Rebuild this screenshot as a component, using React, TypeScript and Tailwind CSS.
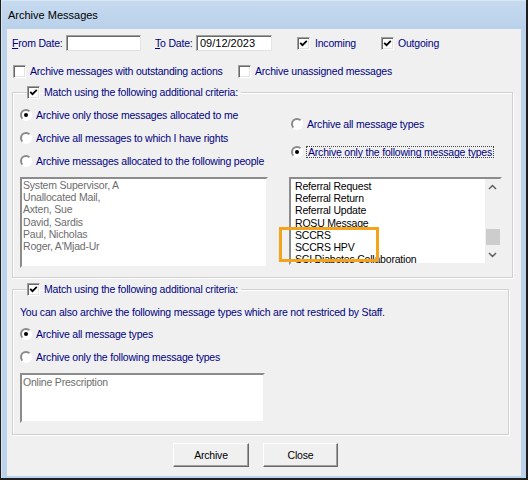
import React from "react";

const Check = ({ checked }: { checked?: boolean }) => (
  <span className="w-[13px] h-[13px] shrink-0 bg-white border border-t-[#a0a0a0] border-l-[#a0a0a0] border-b-white border-r-white shadow-[inset_1px_1px_0_#696969,inset_-1px_-1px_0_#e3e3e3] flex items-center justify-center">
    {checked && (
      <svg width="9" height="9" viewBox="0 0 9 9">
        <path d="M1.2 3.8 L3.5 6.2 L7.8 1.8" stroke="#000" strokeWidth="1.8" fill="none" />
      </svg>
    )}
  </span>
);

const Radio = ({ on }: { on?: boolean }) => (
  <span className="w-[12px] h-[12px] shrink-0 rounded-full bg-white border-2 border-t-[#8a8a8a] border-l-[#8a8a8a] border-r-[#ffffff] border-b-[#ffffff] flex items-center justify-center">
    {on && <span className="w-[4px] h-[4px] rounded-full bg-black" />}
  </span>
);

const Chevron = ({ up }: { up?: boolean }) => (
  <svg width="9" height="6" viewBox="0 0 9 6">
    <path d={up ? "M1 5 L4.5 1.5 L8 5" : "M1 1 L4.5 4.5 L8 1"} stroke="#606060" strokeWidth="1.5" fill="none" />
  </svg>
);

const label = "text-[#000080]";

export default function App() {
  const people = [
    "System Supervisor, A",
    "Unallocated Mail,",
    "Axten, Sue",
    "David, Sardis",
    "Paul, Nicholas",
    "Roger, A'Mjad-Ur",
  ];
  const types = [
    "Referral Request",
    "Referral Return",
    "Referral Update",
    "ROSU Message",
    "SCCRS",
    "SCCRS HPV",
    "SCI Diabetes Collaboration",
  ];
  return (
    <div className="w-[528px] h-[480px] bg-[#1e1e1e] pl-[1px] pr-[2px] pb-[2px] font-['Liberation_Sans',Arial,sans-serif] text-[10.5px] tracking-[-0.2px] leading-[14px]">
      <div className="h-full flex flex-col bg-[#bcd3eb] border-t border-l border-[#d8e6f4]">
        <div className="h-[28px] shrink-0 flex items-center pl-[6px] text-[11px] tracking-normal text-black bg-[linear-gradient(#c6daef,#b9d1ea)]">
          Archive Messages
        </div>
        <div className="flex-1 ml-[5px] mr-[5px] mb-[2px] bg-[#f0f0f0] pl-[5px] flex flex-col">
          {/* Row 1 */}
          <div className="mt-[6px] h-[16px] flex items-center">
            <span className={`${label} w-[54px]`}>
              <span className="underline">F</span>rom Date:
            </span>
            <span className="w-[75px] h-[16px] bg-white border border-t-[#a0a0a0] border-l-[#a0a0a0] border-b-[#e3e3e3] border-r-[#e3e3e3] shadow-[inset_1px_1px_0_#696969]" />
            <span className={`${label} ml-[14px] w-[41px]`}>
              <span className="underline">T</span>o Date:
            </span>
            <span className="w-[76px] h-[16px] bg-white border border-t-[#a0a0a0] border-l-[#a0a0a0] border-b-[#e3e3e3] border-r-[#e3e3e3] shadow-[inset_1px_1px_0_#696969] pl-[3px] text-black flex items-center text-[11px] tracking-normal">
              09/12/2023
            </span>
            <span className="ml-[25px] w-[84px] flex items-center gap-[5px]">
              <Check checked />
              <span className={label}>Incoming</span>
            </span>
            <span className="flex items-center gap-[4px]">
              <Check checked />
              <span className={label}>Outgoing</span>
            </span>
          </div>
          {/* Row 2 */}
          <div className="mt-[13px] h-[14px] flex items-center">
            <span className="ml-[1px] w-[225px] flex items-center gap-[4px]">
              <Check />
              <span className={label}>Archive messages with outstanding actions</span>
            </span>
            <span className="flex items-center gap-[4px]">
              <Check />
              <span className={label}>Archive unassigned messages</span>
            </span>
          </div>

          {/* Group 1 */}
          <fieldset className="relative mt-[7px] w-[501px] border border-[#d0d0d0] shadow-[inset_1px_1px_0_#fff,1px_1px_0_#fff] pl-[7px] pr-[10px] pb-[9px]">
            <legend className="ml-[7px] pr-[3px] h-[14px] flex items-center gap-[4px]">
              <Check checked />
              <span className={label}>Match using the following additional criteria:</span>
            </legend>
            <div className="flex">
              <div className="w-[248px] flex flex-col">
                <div className="mt-[9px] h-[14px] flex items-center gap-[4px]">
                  <Radio on />
                  <span className={label}>Archive only those messages allocated to me</span>
                </div>
                <div className="mt-[9px] h-[14px] flex items-center gap-[4px]">
                  <Radio />
                  <span className={label}>Archive all messages to which I have rights</span>
                </div>
                <div className="mt-[9px] h-[14px] flex items-center gap-[4px]">
                  <Radio />
                  <span className={label}>Archive messages allocated to the following people</span>
                </div>
                <div className="mt-[9px] h-[91px] bg-white border-2 border-t-[#8c8c8c] border-l-[#8c8c8c] border-b-[#f0f0f0] border-r-[#f0f0f0] pt-[0px] pl-[1px] text-[#6d6d6d] leading-[12.2px]">
                  {people.map((p) => (
                    <div key={p}>{p}</div>
                  ))}
                </div>
              </div>
              <div className="ml-[21px] w-[213px] flex flex-col">
                <div className="mt-[18px] ml-[2px] h-[14px] flex items-center gap-[4px]">
                  <Radio />
                  <span className={label}>Archive all message types</span>
                </div>
                <div className="mt-[14px] ml-[2px] h-[14px] flex items-center gap-[3px]">
                  <Radio on />
                  <span className={`${label} border border-dotted border-[#444] leading-[10px] px-[1px]`}>
                    Archive only the following message types
                  </span>
                </div>
                <div className="mt-[18px] h-[88px] bg-white border-2 border-t-[#8c8c8c] border-l-[#8c8c8c] border-b-[#f0f0f0] border-r-[#f0f0f0] flex overflow-hidden">
                  <div className="flex-1 pt-[1px] pl-[4px] text-black leading-[12.2px] overflow-hidden">
                    {types.map((t) => (
                      <div key={t} className="whitespace-nowrap">{t}</div>
                    ))}
                  </div>
                  <div className="w-[15px] bg-[#f0f0f0] flex flex-col items-center">
                    <div className="h-[16px] flex items-center justify-center">
                      <Chevron up />
                    </div>
                    <div className="flex-1 flex flex-col justify-end">
                      <div className="w-[14px] h-[16px] bg-[#cdcdcd] mb-[2px]" />
                    </div>
                    <div className="h-[16px] flex items-center justify-center">
                      <Chevron />
                    </div>
                  </div>
                </div>
              </div>
            </div>
            <div className="absolute left-[266px] top-[128px] w-[100px] h-[35px] border-[3px] border-[#f5a31a]" />
          </fieldset>

          {/* Group 2 */}
          <fieldset className="mt-[4px] w-[497px] border border-[#d0d0d0] shadow-[inset_1px_1px_0_#fff,1px_1px_0_#fff] pl-[7px] pb-[11px]">
            <legend className="ml-[7px] pr-[3px] h-[14px] flex items-center gap-[4px]">
              <Check checked />
              <span className={label}>Match using the following additional criteria:</span>
            </legend>
            <div className="mt-[9px] h-[14px] flex items-center">
              <span className={label}>You can also archive the following message types which are not restriced by Staff.</span>
            </div>
            <div className="mt-[8px] h-[14px] flex items-center gap-[4px]">
              <Radio on />
              <span className={label}>Archive all message types</span>
            </div>
            <div className="mt-[9px] h-[14px] flex items-center gap-[4px]">
              <Radio />
              <span className={label}>Archive only the following message types</span>
            </div>
            <div className="mt-[9px] w-[245px] h-[50px] bg-white border-2 border-t-[#8c8c8c] border-l-[#8c8c8c] border-b-[#f0f0f0] border-r-[#f0f0f0] pt-[1px] pl-[1px] text-[#6d6d6d] leading-[12.3px]">
              Online Prescription
            </div>
          </fieldset>

          {/* Buttons */}
          <div className="mt-[8px] flex pl-[161px] gap-[14px]">
            <button className="w-[76px] h-[24px] bg-[#f0f0f0] border border-t-white border-l-white border-b-[#696969] border-r-[#696969] shadow-[inset_-1px_-1px_0_#a0a0a0] text-black text-[10.5px]">
              Archive
            </button>
            <button className="w-[75px] h-[24px] bg-[#f0f0f0] border border-t-white border-l-white border-b-[#696969] border-r-[#696969] shadow-[inset_-1px_-1px_0_#a0a0a0] text-black text-[10.5px]">
              Close
            </button>
          </div>
        </div>
      </div>
    </div>
  );
}
